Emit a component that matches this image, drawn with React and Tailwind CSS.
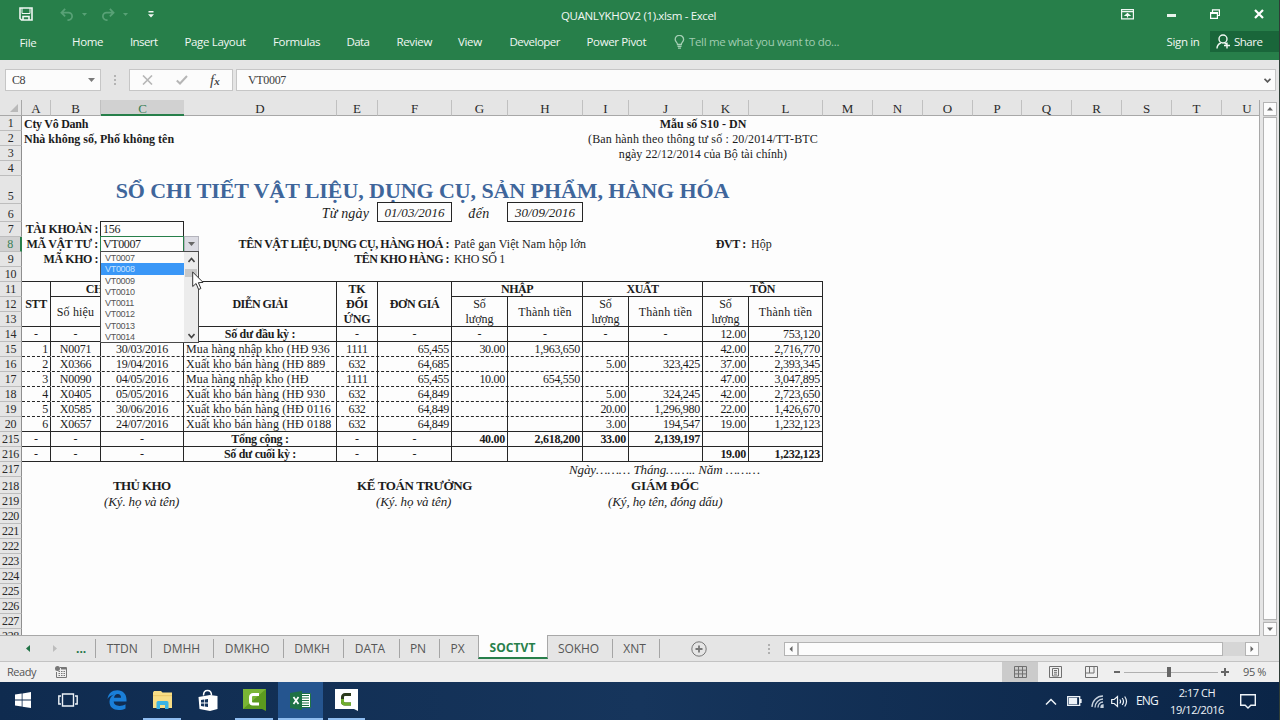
import React from 'react';
import { clsx } from 'clsx';

const COLUMNS = ['A', 'B', 'C', 'D', 'E', 'F', 'G', 'H', 'I', 'J', 'K', 'L', 'M', 'N', 'O', 'P', 'Q', 'R', 'S', 'T', 'U'];
const ROWS = [1, 2, 3, 4, 5, 6, 7, 8, 9, 10, 11, 12, 13, 14, 15, 16, 17, 18, 19, 20, 215, 216, 217, 218, 219, 220, 221, 222, 223, 224, 225, 226, 227, 228];

const MENU = [
    { text: 'Home', className: 'w-[58px]' },
    { text: 'Insert', className: 'w-[54.5px] tracking-[-0.6px]' },
    { text: 'Page Layout', className: 'w-[88.5px]' },
    { text: 'Formulas', className: 'w-[73.5px]' },
    { text: 'Data', className: 'w-[50px] tracking-[-0.6px]' },
    { text: 'Review', className: 'w-[61.5px]' },
    { text: 'View', className: 'w-[51.5px]' },
    { text: 'Developer', className: 'w-[77px] tracking-[-0.5px]' },
    { text: 'Power Pivot', className: 'w-[87px]' },
];

// sheet rows 15 -> 20
const ENTRIES = [
    ['1', 'N0071', '30/03/2016', 'Mua hàng nhập kho (HĐ 936', '1111', '65,455', '30.00', '1,963,650', '', '', '42.00', '2,716,770'],
    ['2', 'X0366', '19/04/2016', 'Xuất kho bán hàng (HĐ 889', '632', '64,685', '', '', '5.00', '323,425', '37.00', '2,393,345'],
    ['3', 'N0090', '04/05/2016', 'Mua hàng nhập kho (HĐ', '1111', '65,455', '10.00', '654,550', '', '', '47.00', '3,047,895'],
    ['4', 'X0405', '05/05/2016', 'Xuất kho bán hàng (HĐ 930', '632', '64,849', '', '', '5.00', '324,245', '42.00', '2,723,650'],
    ['5', 'X0585', '30/06/2016', 'Xuất kho bán hàng (HĐ 0116', '632', '64,849', '', '', '20.00', '1,296,980', '22.00', '1,426,670'],
    ['6', 'X0657', '24/07/2016', 'Xuất kho bán hàng (HĐ 0188', '632', '64,849', '', '', '3.00', '194,547', '19.00', '1,232,123'],
];

const OPENING = ['-', '-', '-', 'Số dư đầu kỳ :', '-', '-', '-', '-', '-', '-', '12.00', '753,120'];
const TOTAL = ['-', '-', '-', 'Tổng cộng :', '-', '-', '40.00', '2,618,200', '33.00', '2,139,197', '', ''];
const CLOSING = ['-', '-', '-', 'Số dư cuối kỳ :', '-', '-', '', '', '', '', '19.00', '1,232,123'];

const LIST = ['VT0007', 'VT0008', 'VT0009', 'VT0010', 'VT0011', 'VT0012', 'VT0013', 'VT0014'];

const TABS = [
    { text: 'TTDN', className: 'w-[56.5px]' },
    { text: 'DMHH', className: 'w-[62px]' },
    { text: 'DMKHO', className: 'w-[69.5px]' },
    { text: 'DMKH', className: 'w-[60px]' },
    { text: 'DATA', className: 'w-[56px]' },
    { text: 'PN', className: 'w-[40px]' },
    { text: 'PX', className: 'w-[38px]' },
    { text: 'SOCTVT', className: 'w-[70px]', active: true },
    { text: 'SOKHO', className: 'w-[65px]' },
    { text: 'XNT', className: 'w-[47px]' },
];

// c / r are 1-based sheet positions, the header track takes the first line
const Cell = ({ c, r, cs = 1, rs = 1, className, children }) => (
    <div
        className={clsx('flex min-w-0 items-center whitespace-nowrap', className)}
        style={{ gridColumn: `${c + 1} / span ${cs}`, gridRow: `${r + 1} / span ${rs}` }}
    >
        {children}
    </div>
);

const line = 'border-[#262626]';

const TitleBar = () => (
    <header className="h-[60px] shrink-0 bg-[#277f4a] text-[11.5px] tracking-[-0.35px] text-[#f1f7f3]">
        <div className="flex h-[31px] items-center">
            <svg className="ml-[19px] mt-[-3px] h-[14px] w-[14px] shrink-0" viewBox="0 0 14 14" fill="none" stroke="#f1f7f3" strokeWidth="1.6">
                <path d="M1 1h12v12H2.500L1 11.500z" />
                <path d="M3 1v5.500h8V1" strokeWidth="1" />
                <path d="M4 13V9.500h6V13" />
            </svg>
            <div className="ml-[27px] mt-[-3px] flex w-[88px] shrink-0 items-center text-[#58a176]">
                <svg className="h-[13px] w-[14px]" viewBox="0 0 15 14" fill="none" stroke="currentColor" strokeWidth="1.9">
                    <path d="M5.500 1L1.500 5l4 4M1.500 5h7.500a4 4 0 0 1 0 8H8" />
                </svg>
                <svg className="ml-[8px] h-[3px] w-[5px]" viewBox="0 0 5 3" fill="currentColor"><path d="M0 0h5L2.500 3z" /></svg>
                <svg className="ml-[14px] h-[13px] w-[14px]" viewBox="0 0 15 14" fill="none" stroke="currentColor" strokeWidth="1.9">
                    <path d="M9.500 1l4 4-4 4M13.500 5H6a4 4 0 0 0 0 8h1" />
                </svg>
                <svg className="ml-[8px] h-[3px] w-[5px]" viewBox="0 0 5 3" fill="currentColor"><path d="M0 0h5L2.500 3z" /></svg>
            </div>
            <svg className="mt-[-3px] h-[7px] w-[6px] shrink-0" viewBox="0 0 6 7" fill="#f1f7f3"><path d="M0.500 0h5v1.500h-5zM0 3.200h6L3 6.500z" /></svg>
            <span className="ml-[407px] w-[560px] shrink-0 whitespace-nowrap">QUANLYKHOV2 (1).xlsm - Excel</span>
            <svg className="mt-[-3px] h-[11px] w-[13px] shrink-0" viewBox="0 0 13 11" fill="none" stroke="#f1f7f3" strokeWidth="1.2">
                <path d="M0.600 0.600h11.800v9.300H0.600zM0.600 2.600h11.800" />
                <path d="M6.500 8.500V5M4.300 6.500l2.200-2 2.200 2z" fill="#f1f7f3" />
            </svg>
            <span className="ml-[33px] h-[3px] w-[9px] shrink-0 bg-[#e9f3ed]" />
            <svg className="ml-[34px] mt-[-3px] h-[10px] w-[10px] shrink-0" viewBox="0 0 10 10" fill="none" stroke="#fff" strokeWidth="1.200">
                <path d="M0.600 3.600h6.800v5.700H0.600zM0.600 4.400h6.800M2.500 3V0.900h6.900v5.600H8" />
            </svg>
            <svg className="ml-[34px] mt-[-3px] h-[10px] w-[10px] shrink-0" viewBox="0 0 10 10" stroke="#fff" strokeWidth="2.200"><path d="M1 1l8 8M9 1L1 9" /></svg>
        </div>
        <div className="flex h-[21px] items-center whitespace-nowrap">
            <span className="ml-[19.5px] mt-[2px] w-[52.5px] shrink-0">File</span>
            {MENU.map((m) => (
                <span key={m.text} className={clsx('shrink-0', m.className)}>{m.text}</span>
            ))}
            <svg className="h-[14px] w-[11px] shrink-0" viewBox="0 0 11 14" fill="none" stroke="#a5cfb5" strokeWidth="1.3">
                <path d="M3.500 9.500C3.500 7.500 1.200 6.800 1.200 4.500a4 4 0 0 1 8.400 0c0 2.300-2.300 3-2.300 5zM3.500 11.300h4M4 13.200h3" />
            </svg>
            <span className="ml-[4.5px] w-[477.5px] shrink-0 tracking-[-0.34px] text-[#a0ccb1]">Tell me what you want to do...</span>
            <span className="w-[43.5px] shrink-0">Sign in</span>
            <span className="flex h-[21px] flex-1 items-center bg-[#19663a] pl-[6px]">
                <svg className="mr-[3px] h-[15px] w-[15px] shrink-0" viewBox="0 0 15 15" fill="none" stroke="#f1f7f3" strokeWidth="1.4">
                    <circle cx="7" cy="5" r="4" />
                    <path d="M1 14.500c0-3 1.500-4.500 3.800-5.500M8.500 8.800l2 1.500M11 8.500v6M8 11.500h6" />
                </svg>
                <span className="tracking-[-0.5px]">Share</span>
            </span>
        </div>
    </header>
);

const FormulaBar = () => (
    <div className="flex h-[40px] shrink-0 items-start bg-[#e5e5e5] pt-[9px] font-['Liberation_Serif',serif] text-[12px] text-[#3c3c3c]">
        <div className="ml-[5px] flex h-[22px] w-[96px] shrink-0 items-center justify-between border border-[#c6c6c6] bg-[#fcfcfc] pl-[6px] pr-[5px]">
            <span className="tracking-[-0.4px]">C8</span>
            <svg className="h-[4px] w-[7px]" viewBox="0 0 7 4" fill="#7a7a7a"><path d="M0 0h7L3.500 4z" /></svg>
        </div>
        <div className="ml-[13px] mt-[6px] flex w-[15px] shrink-0 flex-col gap-[2px]">
            {[0, 1, 2].map((i) => <span key={i} className="h-[2px] w-[2px] bg-[#b4b4b4]" />)}
        </div>
        <div className="flex h-[22px] w-[104px] shrink-0 items-center border border-[#c6c6c6] bg-[#fcfcfc] pl-[12px]">
            <svg className="h-[10px] w-[11px]" viewBox="0 0 11 10" stroke="#b6b6b6" strokeWidth="1.6"><path d="M1 0.500l9 9M10 0.500l-9 9" /></svg>
            <svg className="ml-[23px] h-[10px] w-[12px]" viewBox="0 0 12 10" fill="none" stroke="#b6b6b6" strokeWidth="2"><path d="M0.800 5.500l3.200 3L11 1" /></svg>
            <span className="ml-[22px] text-[15px] leading-none italic text-[#444]">f<span className="text-[11px] font-bold">x</span></span>
        </div>
        <div className="ml-[3px] flex h-[22px] w-[1040px] shrink-0 items-center justify-between border border-[#c6c6c6] bg-[#fcfcfc] pl-[11px] pr-[4px]">
            <span className="tracking-[-0.33px]">VT0007</span>
            <svg className="h-[5px] w-[7px]" viewBox="0 0 7 5" fill="none" stroke="#5a5a5a" strokeWidth="1.8"><path d="M0.500 0.800l3 3 3-3" /></svg>
        </div>
    </div>
);

// cell style of one ledger line, by column
const entryStyle = (i) => clsx(
    (i === 1 || i === 2 || i === 4) && 'justify-center',
    i === 3 && 'overflow-hidden pl-[2px] tracking-[0.12px]',
    (i === 0 || i > 4) && 'justify-end pr-[2px]',
    i !== 3 && 'tracking-[-0.28px]',
);

const LedgerRow = ({ r, values, bold, dashed }) => values.map((v, i) => {
    const caption = i === 3 && values[0] === '-';
    return (
        <Cell
            key={i}
            c={i + 1}
            r={r}
            className={clsx(
                'border-r border-b pt-px', line,
                dashed && 'border-b-transparent',
                v === '-' || caption ? 'justify-center' : entryStyle(i),
                caption && 'tracking-[-0.3px]',
                ((bold && v !== '-') || caption) && 'font-bold',
            )}
        >
            {v}
        </Cell>
    );
});

const Head = ({ className, ...rest }) => (
    <Cell {...rest} className={clsx('justify-center border-r border-b text-center', line, className)} />
);

const Dropdown = () => (
    <div className="absolute left-[100px] top-[151px] flex h-[92px] w-[99px] border border-[#4a4a4a] bg-[#fcfcfc] font-['Liberation_Sans',sans-serif] text-[9px] tracking-[-0.3px] text-[#555]">
        <div className="flex w-[83px] flex-col overflow-hidden">
            {LIST.map((code) => (
                <div
                    key={code}
                    className={clsx('h-[11.25px] shrink-0 pl-[4px] leading-[12px]', code === 'VT0008' && 'bg-[#3a97f7] text-[#c9e4ff]')}
                >
                    {code}
                </div>
            ))}
        </div>
        <div className="flex flex-1 flex-col items-center bg-[#ececec]">
            <svg className="mt-[5px] h-[6px] w-[7px]" viewBox="0 0 7 6" fill="none" stroke="#444" strokeWidth="1.6"><path d="M0.500 5l3-3.500 3 3.500" /></svg>
            <span className="mt-[6px] h-[8px] w-[12px] bg-[#c8c8c8]" />
            <svg className="mt-[56px] h-[6px] w-[7px]" viewBox="0 0 7 6" fill="none" stroke="#444" strokeWidth="1.6"><path d="M0.500 1l3 3.500 3-3.500" /></svg>
        </div>
    </div>
);

const Sheet = () => (
    <div className="relative grid h-[536px] w-[1260px] shrink-0 grid-cols-[22px_29px_50px_83px_153px_41px_74px_56px_75px_46px_74px_46px_74px_50px_50px_50px_49px_50px_50px_50px_50px_38px] grid-rows-[16px_repeat(4,15px)_28px_18px_repeat(17,15px)_17px_repeat(10,15px)] overflow-hidden border-b border-r border-[#a8a8a8] bg-[#fdfdfd] font-['Liberation_Serif',serif] text-[12px] leading-[15px] text-[#1c1c1c]">
        <div className="flex items-end justify-end border-r border-b border-[#a8a8a8] bg-[#e5e5e5] pr-[3px] pb-[3px]">
            <svg className="h-[8px] w-[8px]" viewBox="0 0 8 8" fill="#b9b9b9"><path d="M8 0v8H0z" /></svg>
        </div>
        {COLUMNS.map((name) => (
            <div
                key={name}
                className={clsx(
                    'flex justify-center pt-px text-[13px]',
                    name === 'C' ? 'border-b-2 border-[#277f4a] bg-[#d1d1d1] text-[#3a7f57]' : 'border-r border-b border-r-[#c0c0c0] border-b-[#a8a8a8] bg-[#e5e5e5] text-[#2a2a2a]',
                    name === 'U' && 'pl-[13px]',
                )}
            >
                {name}
            </div>
        ))}
        {ROWS.map((n, i) => (
            <div
                key={n}
                className={clsx(
                    'flex items-end justify-center border-b border-[#bdbdbd] text-[12px] leading-[14px] tracking-[-0.3px]',
                    n === 8 ? 'border-r-2 border-r-[#277f4a] bg-[#d1d1d1] text-[#3a7f57]' : 'border-r border-r-[#8f8f8f] bg-[#e5e5e5] text-[#2a2a2a]',
                )}
                style={{ gridColumn: 1, gridRow: i + 2 }}
            >
                {n}
            </div>
        ))}

        <Cell c={1} r={1} cs={5} className="pl-[2px] pt-px font-bold tracking-[-0.27px]">Cty Vô Danh</Cell>
        <Cell c={1} r={2} cs={5} className="pl-[2px] pt-px font-bold">Nhà không số, Phố không tên</Cell>
        <Cell c={9} r={1} cs={4} className="justify-center pt-px font-bold">Mẫu số S10 - DN</Cell>
        <Cell c={9} r={2} cs={4} className="justify-center pt-px tracking-[0.16px]">(Ban hành theo thông tư số : 20/2014/TT-BTC</Cell>
        <Cell c={9} r={3} cs={4} className="justify-center pt-px tracking-[0.06px]">ngày 22/12/2014 của Bộ tài chính)</Cell>

        <Cell c={1} r={5} cs={12} className="justify-center text-[22px] font-bold tracking-[-0.08px] text-[#3f669b]">
            SỔ CHI TIẾT VẬT LIỆU, DỤNG CỤ, SẢN PHẨM, HÀNG HÓA
        </Cell>

        <Cell c={3} r={6} cs={3} className="justify-end pr-[9px] text-[14px] tracking-[0.15px] italic">Từ ngày</Cell>
        <Cell c={6} r={6} className={clsx('-mt-[2px] -ml-px justify-center border text-[13px] tracking-[0.1px] italic', line)}>01/03/2016</Cell>
        <Cell c={7} r={6} className="justify-center pr-[2px] text-[14px] tracking-[0.4px] italic">đến</Cell>
        <Cell c={8} r={6} className={clsx('-mt-[2px] -ml-px justify-center border text-[13px] tracking-[0.1px] italic', line)}>30/09/2016</Cell>

        <Cell c={1} r={7} cs={2} className="justify-end pr-[3px] font-bold tracking-[-0.4px]">TÀI KHOẢN :</Cell>
        <Cell c={3} r={7} className={clsx('-mt-px -ml-px border pl-[2px] tracking-[-0.3px]', line)}>156</Cell>
        <Cell c={1} r={8} cs={2} className="justify-end pr-[3px] font-bold tracking-[-0.33px]">MÃ VẬT TƯ :</Cell>
        <Cell c={3} r={8} className="-mt-px -ml-px border border-[#277f4a] pl-[2px] tracking-[-0.4px]">VT0007</Cell>
        <Cell c={4} r={8} className="-mt-px h-[16px] w-[15px] justify-center border border-[#b4b4bc] bg-[#dcdce4]">
            <svg className="h-[4px] w-[7px]" viewBox="0 0 7 4" fill="#666"><path d="M0 0h7L3.500 4z" /></svg>
        </Cell>
        <Cell c={1} r={9} cs={2} className="justify-end pr-[3px] font-bold tracking-[-0.45px]">MÃ KHO :</Cell>
        <Cell c={4} r={8} cs={3} className="ml-[20px] justify-end pr-[3px] font-bold tracking-[-0.47px]">TÊN VẬT LIỆU, DỤNG CỤ, HÀNG HOÁ :</Cell>
        <Cell c={7} r={8} cs={4} className="pl-[2px] tracking-[0.1px]">Patê gan Việt Nam hộp lớn</Cell>
        <Cell c={11} r={8} className="justify-end pr-[3px] font-bold tracking-[-0.35px]">ĐVT :</Cell>
        <Cell c={12} r={8} className="pl-[2px]">Hộp</Cell>
        <Cell c={4} r={9} cs={3} className="justify-end pr-[3px] font-bold tracking-[-0.5px]">TÊN KHO HÀNG :</Cell>
        <Cell c={7} r={9} cs={3} className="pl-[2px] tracking-[-0.3px]">KHO SỐ 1</Cell>

        <Cell c={1} r={10} cs={12} className={clsx('border-b', line)} />
        <Head c={1} r={11} rs={3} className="font-bold tracking-[-0.4px]">STT</Head>
        <Head c={2} r={11} cs={2} className="font-bold tracking-[-0.4px]">CHỨNG TỪ</Head>
        <Head c={4} r={11} rs={3} className="font-bold tracking-[-0.6px]">DIỄN GIẢI</Head>
        <Head c={5} r={11} rs={3} className="font-bold tracking-[-0.2px]">TK<br />ĐỐI<br />ỨNG</Head>
        <Head c={6} r={11} rs={3} className="font-bold tracking-[-0.4px]">ĐƠN GIÁ</Head>
        <Head c={7} r={11} cs={2} className="font-bold tracking-[-0.5px]">NHẬP</Head>
        <Head c={9} r={11} cs={2} className="font-bold tracking-[-0.5px]">XUẤT</Head>
        <Head c={11} r={11} cs={2} className="font-bold tracking-[-0.3px]">TỒN</Head>
        <Head c={2} r={12} rs={2} className="pt-px tracking-[0.15px]">Số hiệu</Head>
        <Head c={3} r={12} rs={2} />
        {[7, 9, 11].map((c) => (
            <React.Fragment key={c}>
                <Head c={c} r={12} rs={2} className="pt-px">Số<br />lượng</Head>
                <Head c={c + 1} r={12} rs={2} className="pt-px tracking-[0.2px]">Thành tiền</Head>
            </React.Fragment>
        ))}

        <LedgerRow r={14} values={OPENING} />
        {ENTRIES.map((values, i) => (
            <React.Fragment key={values[0]}>
                <LedgerRow r={15 + i} values={values} dashed={i < 5} />
                {i < 5 && <Cell c={1} r={15 + i} cs={12} className={clsx('border-b border-dashed', line)} />}
            </React.Fragment>
        ))}
        <LedgerRow r={21} values={TOTAL} bold />
        <LedgerRow r={22} values={CLOSING} bold />

        <Cell c={9} r={23} cs={4} className="-ml-[14px] text-[13px] tracking-[-0.12px] italic">Ngày……… Tháng…….. Năm ………</Cell>
        <Cell c={2} r={24} cs={3} className="pl-[62px] text-[13px] font-bold tracking-[-0.6px]">THỦ KHO</Cell>
        <Cell c={5} r={24} cs={3} className="pl-[20px] text-[13px] font-bold tracking-[-0.36px]">KẾ TOÁN TRƯỞNG</Cell>
        <Cell c={10} r={24} cs={2} className="pl-[2px] text-[13px] font-bold tracking-[-0.12px]">GIÁM ĐỐC</Cell>
        <Cell c={2} r={25} cs={3} className="pl-[53px] text-[13px] tracking-[-0.13px] italic">(Ký. họ và tên)</Cell>
        <Cell c={5} r={25} cs={3} className="pl-[39px] text-[13px] tracking-[-0.13px] italic">(Ký. họ và tên)</Cell>
        <Cell c={9} r={25} cs={4} className="pl-[25px] text-[13px] tracking-[-0.12px] italic">(Ký, họ tên, đóng dấu)</Cell>

        <Dropdown />
        <svg className="absolute left-[192px] top-[171px] h-[20px] w-[13px]" viewBox="0 0 13 20" fill="#fff" stroke="#333" strokeWidth="1">
            <path d="M0.700 1v14.500l3.400-3 2.500 6 2.300-1-2.500-5.800 4.700-0.300z" />
        </svg>
    </div>
);

const Arrow = ({ d, className }) => (
    <span className={clsx('flex h-[14px] w-[14px] shrink-0 items-center justify-center border border-[#b4b4b4] bg-[#fcfcfc]', className)}>
        <svg className="h-[6px] w-[6px]" viewBox="0 0 6 6" fill="#666"><path d={d} /></svg>
    </span>
);

const VerticalScroll = () => (
    <div className="flex h-[536px] flex-1 flex-col items-start bg-[#e5e5e5] pl-[3px] pt-[2px]">
        <Arrow d="M0 4.500L3 1l3 3.500z" />
        <div className="flex h-[507px] w-[14px] flex-col bg-[#d6d6d6]">
            <span className="mt-px h-[503px] border border-[#b4b4b4] bg-[#fcfcfc]" />
        </div>
        <Arrow d="M0 1.500L3 5l3-3.500z" />
    </div>
);

const SheetTabs = () => (
    <div className="flex h-[26px] shrink-0 border-b border-[#c3c3c3] bg-[#e5e5e5] text-[12px] text-[#565656]">
        <div className="flex w-[94.5px] shrink-0 items-center pl-[26px]">
            <svg className="h-[7px] w-[4px]" viewBox="0 0 4 7" fill="#217346"><path d="M4 0v7L0 3.500z" /></svg>
            <svg className="ml-[23px] h-[7px] w-[4px]" viewBox="0 0 4 7" fill="#bdbdbd"><path d="M0 0v7l4-3.500z" /></svg>
            <span className="ml-[19px] font-bold text-[#217346]">...</span>
        </div>
        <span className="mt-[3px] h-[19px] w-px shrink-0 bg-[#a5a5a5]" />
        {TABS.map((tab) => (
            <div
                key={tab.text}
                className={clsx(
                    'relative flex shrink-0 items-center justify-center',
                    tab.className,
                    tab.active
                        ? '-mt-px h-[24px] border-x border-b-2 border-x-[#a8a8a8] border-b-[#277f4a] bg-[#fdfdfd] pt-[4px] font-bold tracking-[0.1px] text-[#277f4a]'
                        : 'mt-[3px] h-[19px] border-r border-[#a5a5a5] pr-[2px] tracking-[-0.05px]',
                    tab.text === 'PX' && 'border-r-0',
                )}
            >
                {tab.text}
            </div>
        ))}
        <svg className="ml-[31px] mt-[5px] h-[16px] w-[16px] shrink-0" viewBox="0 0 16 16" fill="none" stroke="#787878">
            <circle cx="8" cy="8" r="7.200" />
            <path d="M8 4.500v7M4.500 8h7" strokeWidth="1.800" />
        </svg>
        <div className="ml-[61px] mt-[8px] flex w-[16px] shrink-0 flex-col gap-[2px]">
            {[0, 1, 2].map((i) => <span key={i} className="h-[2px] w-[2px] bg-[#b0b0b0]" />)}
        </div>
        <div className="mt-[6px] flex h-[14px] w-[475px] shrink-0 bg-[#d6d6d6]">
            <Arrow d="M4.500 0v6L1.500 3z" />
            <span className="h-[14px] w-[425px] border border-[#b4b4b4] bg-[#fcfcfc]" />
            <Arrow d="M1.500 0v6l3-3z" className="ml-auto" />
        </div>
    </div>
);

const StatusBar = () => (
    <div className="flex h-[20px] shrink-0 items-center bg-[#efefef] text-[11px] text-[#555]">
        <span className="ml-[7px] w-[48px] tracking-[-0.45px]">Ready</span>
        <svg className="h-[12px] w-[12px] shrink-0" viewBox="0 0 12 12" fill="none" stroke="#777">
            <path d="M5 1.500h6.500v10h-10V6" />
            <path d="M3.500 5.500h7M3.500 7.500h7M3.500 9.500h7" strokeDasharray="1.500 1" />
            <path d="M6 2.500h5" strokeWidth="2" />
            <circle cx="2.500" cy="2.500" r="2.500" fill="#777" stroke="none" />
        </svg>
        <span className="ml-[935px] flex h-[20px] w-[36px] shrink-0 items-center justify-center bg-[#cbcbcb]">
            <svg className="h-[12px] w-[13px]" viewBox="0 0 13 12" fill="none" stroke="#707070"><path d="M0.500 0.500h12v11h-12zM0.500 4.200h12M0.500 7.900h12M4.500 0.500v11M8.500 0.500v11" /></svg>
        </span>
        <svg className="ml-[11px] h-[12px] w-[13px] shrink-0" viewBox="0 0 13 12" fill="none" stroke="#707070"><path d="M0.500 0.500h12v11h-12zM3.500 2.500h6v7.500h-6zM5 4.500h3M5 6.300h3M5 8.100h3" /></svg>
        <svg className="ml-[23px] h-[12px] w-[13px] shrink-0" viewBox="0 0 13 12" fill="none" stroke="#707070"><path d="M0.500 0.500h12v11h-12zM0.500 7h8.500V0.500M4.500 0.500V7" /></svg>
        <span className="ml-[16px] h-[2px] w-[6px] shrink-0 bg-[#666]" />
        <div className="ml-[4px] flex w-[94px] shrink-0 items-center">
            <span className="h-px w-[43px] bg-[#b0b0b0]" />
            <span className="h-[10px] w-[4px] bg-[#666]" />
            <span className="h-px flex-1 bg-[#b0b0b0]" />
        </div>
        <svg className="ml-[3px] h-[8px] w-[8px] shrink-0" viewBox="0 0 8 8" stroke="#666" strokeWidth="2"><path d="M4 0v8M0 4h8" /></svg>
        <span className="ml-[14px] shrink-0 whitespace-nowrap tracking-[-0.4px]">95 %</span>
    </div>
);

const TaskIcon = ({ className, open, children }) => (
    <div className={clsx('flex h-[38px] shrink-0 items-center justify-center border-b-2', open ? 'border-[#8fbdf0]' : 'border-transparent', className)}>
        {children}
    </div>
);

const Taskbar = () => (
    <footer className="flex h-[38px] shrink-0 items-center bg-linear-to-r from-[#0f2b4f] via-[#16355c] via-50% to-[#0b2547] text-[11px] text-[#eef3f8]">
        <TaskIcon className="w-[46px]">
            <svg className="h-[16px] w-[16px]" viewBox="0 0 16 16" fill="#fff"><path d="M0 2.500l6.700-1v6H0zM7.500 1.400L16 0v7.500H7.500zM0 8.400h6.700v6L0 13.500zM7.500 8.400H16V16l-8.500-1.300z" /></svg>
        </TaskIcon>
        <TaskIcon className="w-[44px]">
            <svg className="h-[14px] w-[20px]" viewBox="0 0 20 14" fill="none" stroke="#eef3f8" strokeWidth="1.4"><path d="M4.500 1h11v12h-11zM3 3H0.800v8H3M17 3h2.200v8H17" /></svg>
        </TaskIcon>
        <TaskIcon className="w-[53px]">
            <svg className="h-[20px] w-[20px]" viewBox="0 0 20 20" fill="#1a7fd8">
                <path d="M0.500 9C1.300 3.500 5 0.300 10.300 0.300c5.700 0 9.200 4 9.200 9.300v2H6.700c0.200 3 2.600 4.300 5.800 4.300 2.200 0 4.300-0.600 6-1.700v4.200c-2 1-4.300 1.500-6.800 1.500-5.500 0-9.200-3-9.200-8.200 0-3.200 1.700-5.800 4.700-7.200C4.500 5.200 2 6.500 0.500 9zM7 7.800h7c0-2.500-1.200-3.700-3.200-3.700C8.700 4.100 7.400 5.500 7 7.800z" />
            </svg>
        </TaskIcon>
        <TaskIcon className="w-[38px]" open>
            <svg className="h-[18px] w-[21px]" viewBox="0 0 21 18">
                <path d="M1 1.500L2 0h7l1.500 1.500H20V17H1z" fill="#f7dd85" />
                <path d="M1 4h19v1.200H1z" fill="#ecca6b" />
                <path d="M4.500 18v-6.500a1.500 1.500 0 0 1 1.500-1.500h9a1.500 1.500 0 0 1 1.500 1.500V18H13v-4H8v4z" fill="#3ab4e5" />
            </svg>
        </TaskIcon>
        <TaskIcon className="w-[54px]">
            <svg className="h-[22px] w-[20px]" viewBox="0 0 20 22" fill="#fff">
                <path d="M5.500 6.500c0-3 1.500-5 4-5s4 2 4 5" fill="none" stroke="#fff" strokeWidth="1.500" />
                <path d="M0.500 8L12 6v16L1.500 20zM12 6l7.500 1v13L12 22z" />
                <path d="M3 11l3-0.400v3H3zM6.700 10.500l3.300-0.500v3.600H6.700zM3 14.400h3v3L3 17zM6.700 14.400H10V18L6.700 17.500z" fill="#15345c" />
            </svg>
        </TaskIcon>
        <TaskIcon className="w-[38px]" open>
            <svg className="h-[22px] w-[23px]" viewBox="0 0 23 22">
                <path d="M0 0h23v22l-4-2H0z" fill="#5c9a1f" />
                <path d="M0 0h23L0 20z" fill="#7ab535" />
                <path d="M16 5.500h-6a2.500 2.500 0 0 0-2.500 2.500v4.500A2.500 2.500 0 0 0 10 15h6" fill="none" stroke="#fff" strokeWidth="3" />
            </svg>
        </TaskIcon>
        <TaskIcon className="ml-[5px] w-[45px] bg-[#25558f]" open>
            <svg className="h-[19px] w-[21px]" viewBox="0 0 21 19">
                <path d="M10 2.500h10.500v14H10z" fill="#fff" stroke="#1e7145" />
                <path d="M12 4.500h7M12 7h7M12 9.500h7M12 12h7M12 14.500h7" stroke="#1e7145" strokeWidth="1.2" />
                <path d="M0 2l12-2v19L0 17z" fill="#1e7145" />
                <path d="M3.500 6l5 7M8.500 6l-5 7" stroke="#fff" strokeWidth="1.700" />
            </svg>
        </TaskIcon>
        <TaskIcon className="ml-[5px] w-[37px]" open>
            <svg className="h-[22px] w-[23px]" viewBox="0 0 23 22">
                <path d="M0 0h23v22l-4-2H0z" fill="#fff" />
                <path d="M16 5.500h-6a2.500 2.500 0 0 0-2.500 2.500v4.500A2.500 2.500 0 0 0 10 15h6" fill="none" stroke="#2c3a1c" strokeWidth="3" />
                <path d="M16 15h-6a2.500 2.500 0 0 1-2.500-2.500V10" fill="none" stroke="#6fae2c" strokeWidth="3" />
            </svg>
        </TaskIcon>
        <div className="ml-auto flex h-[38px] w-[236px] shrink-0 items-center whitespace-nowrap">
            <svg className="ml-[2px] h-[7px] w-[12px] shrink-0" viewBox="0 0 12 7" fill="none" stroke="#eef3f8" strokeWidth="1.5"><path d="M1 6.500l5-5 5 5" /></svg>
            <svg className="ml-[10px] h-[10px] w-[15px] shrink-0" viewBox="0 0 15 10" fill="none" stroke="#eef3f8" strokeWidth="1.3"><path d="M0.700 0.700h12v8.600h-12zM14 3v4" /><path d="M2.500 2.500h7v5h-7z" fill="#eef3f8" /></svg>
            <svg className="ml-[9px] h-[13px] w-[13px] shrink-0" viewBox="0 0 13 13" fill="none" stroke="#c7d2de" strokeWidth="1.3">
                <path d="M1 12C1 6 6 1 12 1M4 12.500C4 8 8 4 12 4M7 12.500c0-3 2-5.500 5-5.500" />
                <path d="M10 12.500c0-1.500 1-2.500 2-2.500v2.500z" fill="#eef3f8" />
            </svg>
            <svg className="ml-[7px] h-[13px] w-[17px] shrink-0" viewBox="0 0 17 13" fill="none" stroke="#eef3f8" strokeWidth="1.2"><path d="M0.700 4.500h2.500L6.500 1.500v10L3.200 8.500H0.700zM8.800 4.500q1.500 2 0 4M11.200 3q2.600 3.500 0 7M13.700 1.500q3.600 5 0 10" /></svg>
            <span className="ml-[8px] w-[22px] text-[12px] tracking-[-0.9px]">ENG</span>
            <div className="ml-[9px] w-[60px] text-center text-[11px] leading-[17px] tracking-[-0.45px]">
                <div>2:17 CH</div>
                <div>19/12/2016</div>
            </div>
            <svg className="ml-[13px] h-[15px] w-[16px] shrink-0" viewBox="0 0 16 15" fill="none" stroke="#eef3f8" strokeWidth="1.4"><path d="M0.700 0.700h14.600v10.600h-4.500L8 14l-2.800-2.700H0.700z" /></svg>
        </div>
    </footer>
);

export default function App() {
    return (
        <div className="flex h-[720px] w-[1280px] overflow-hidden font-['Open_Sans',sans-serif]">
            <div className="flex w-[1279px] shrink-0 flex-col bg-[#e5e5e5]">
                <TitleBar />
                <FormulaBar />
                <div className="flex h-[536px] shrink-0">
                    <Sheet />
                    <VerticalScroll />
                </div>
                <SheetTabs />
                <StatusBar />
                <Taskbar />
            </div>
            <div className="w-px shrink-0 bg-[#2f3d36]" />
        </div>
    );
}
